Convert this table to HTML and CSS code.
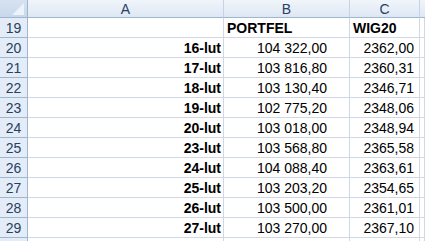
FILE: index.html
```html
<!DOCTYPE html>
<html>
<head>
<meta charset="utf-8">
<link rel="stylesheet" href="styles.css">
</head>
<body>
<div class="sheet">
  <div class="corner"><span class="tri"></span></div>
  <div class="colhead">A</div>
  <div class="colhead">B</div>
  <div class="colhead">C</div>
  <div class="colhead last"></div>

  <div class="rowhead">19</div>
  <div class="cell"></div>
  <div class="cell hdr">PORTFEL</div>
  <div class="cell hdr">WIG20</div>
  <div class="cell"></div>

  <div class="rowhead">20</div><div class="cell date">16-lut</div><div class="cell num">104 322,00</div><div class="cell val">2362,00</div><div class="cell"></div>
  <div class="rowhead">21</div><div class="cell date">17-lut</div><div class="cell num">103 816,80</div><div class="cell val">2360,31</div><div class="cell"></div>
  <div class="rowhead">22</div><div class="cell date">18-lut</div><div class="cell num">103 130,40</div><div class="cell val">2346,71</div><div class="cell"></div>
  <div class="rowhead">23</div><div class="cell date">19-lut</div><div class="cell num">102 775,20</div><div class="cell val">2348,06</div><div class="cell"></div>
  <div class="rowhead">24</div><div class="cell date">20-lut</div><div class="cell num">103 018,00</div><div class="cell val">2348,94</div><div class="cell"></div>
  <div class="rowhead">25</div><div class="cell date">23-lut</div><div class="cell num">103 568,80</div><div class="cell val">2365,58</div><div class="cell"></div>
  <div class="rowhead">26</div><div class="cell date">24-lut</div><div class="cell num">104 088,40</div><div class="cell val">2363,61</div><div class="cell"></div>
  <div class="rowhead">27</div><div class="cell date">25-lut</div><div class="cell num">103 203,20</div><div class="cell val">2354,65</div><div class="cell"></div>
  <div class="rowhead">28</div><div class="cell date">26-lut</div><div class="cell num">103 500,00</div><div class="cell val">2361,01</div><div class="cell"></div>
  <div class="rowhead">29</div><div class="cell date">27-lut</div><div class="cell num">103 270,00</div><div class="cell val">2367,10</div><div class="cell"></div>

  <div class="rowhead"></div><div class="cell"></div><div class="cell"></div><div class="cell"></div><div class="cell"></div>
</div>
</body>
</html>
```
FILE: styles.css
```css
html, body {
  margin: 0;
  padding: 0;
  background: #ffffff;
}
.sheet {
  display: grid;
  grid-template-columns: 28px 196px 126px 70px 1fr;
  grid-template-rows: 18px repeat(12, 20px);
  width: 425px;
  height: 241px;
  overflow: hidden;
  font-family: "Liberation Sans", Arial, sans-serif;
  font-size: 14px;
  color: #000;
}
.sheet > div {
  box-sizing: border-box;
  display: flex;
  align-items: center;
  white-space: nowrap;
  overflow: hidden;
}
.corner {
  position: relative;
  background: linear-gradient(#d6e2f1, #c8d8ec);
  border-right: 1px solid #9eb6ce;
  border-bottom: 1px solid #9eb6ce;
}
.tri {
  position: absolute;
  right: 3px;
  bottom: 2px;
  width: 0;
  height: 0;
  border-left: 12px solid transparent;
  border-bottom: 12px solid #eef3fa;
}
.colhead {
  justify-content: center;
  background: linear-gradient(#f1f5fb, #dde7f4);
  border-right: 1px solid #c5d3e3;
  border-bottom: 1px solid #9eb6ce;
  color: #27415f;
  font-size: 14px;
}
.colhead.last {
  border-right: none;
}
.rowhead {
  justify-content: center;
  background: #e4ecf7;
  border-right: 1px solid #9eb6ce;
  border-bottom: 1px solid #9eb6ce;
  color: #27415f;
  font-size: 14px;
}
.cell {
  border-right: 1px solid #d0d7e5;
  border-bottom: 1px solid #d0d7e5;
  padding-top: 1px;
}
.hdr {
  font-weight: bold;
  padding-left: 3px;
}
.date {
  justify-content: flex-end;
  font-weight: bold;
  padding-right: 2px;
}
.num {
  justify-content: flex-end;
  padding-right: 22px;
}
.val {
  justify-content: flex-end;
  padding-right: 5px;
}
```
